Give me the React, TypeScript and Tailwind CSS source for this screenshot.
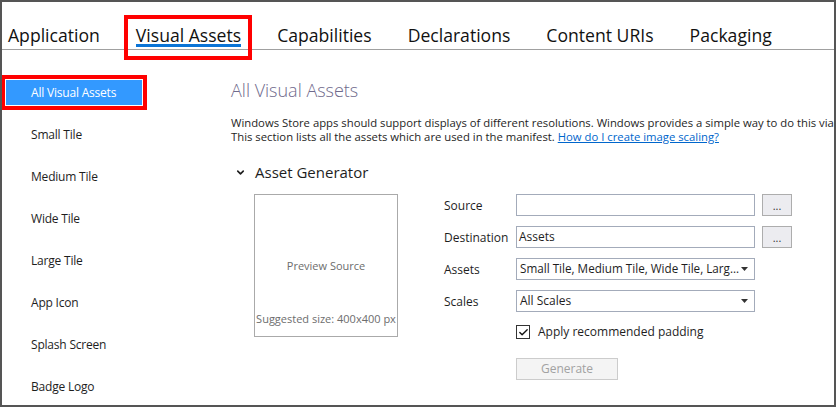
import { Check, ChevronDown } from 'lucide-react'

const tabs = ['Application', 'Visual Assets', 'Capabilities', 'Declarations', 'Content URIs', 'Packaging']

const sideItems = [
  'All Visual Assets',
  'Small Tile',
  'Medium Tile',
  'Wide Tile',
  'Large Tile',
  'App Icon',
  'Splash Screen',
  'Badge Logo',
]

const Caret = () => (
  <svg width="7" height="4" viewBox="0 0 7 4" className="shrink-0">
    <path d="M0 0h7L3.5 4z" fill="#333" />
  </svg>
)

const FieldRow = ({ label, children }: { label: string; children: React.ReactNode }) => (
  <div className="flex h-[22px] items-center">
    <span className="w-[72px] pt-[2px] text-[12px] text-[#1e1e1e]">{label}</span>
    {children}
  </div>
)

const BrowseButton = () => (
  <button className="ml-[7px] h-[22px] w-[30px] border border-[#adadad] bg-[#ececf0] text-[11px] leading-none text-[#333]">
    ...
  </button>
)

export default function App() {
  return (
    <div className="flex h-[407px] w-[836px] flex-col overflow-hidden border-2 border-[#555555] bg-white font-['Open_Sans',sans-serif] text-[#1e1e1e]">
      <nav className="flex h-[48px] shrink-0 items-end gap-[36px] border-b border-[#a0a0a0] pl-[6px]">
        {tabs.map((tab) => (
          <div key={tab} className="relative flex h-full items-end pb-[2px]">
            <span className="text-[17.6px] leading-[24px] text-[#111]">{tab}</span>
            {tab === 'Visual Assets' && (
              <>
                <span className="absolute bottom-[2px] left-0 right-0 h-[3px] bg-[#0a74d6]" />
                <span className="absolute -bottom-[11px] -left-[12px] -right-[11px] top-[13px] border-4 border-[#ff0000]" />
              </>
            )}
          </div>
        ))}
      </nav>

      <div className="flex min-h-0 flex-1">
        <aside className="relative flex w-[200px] shrink-0 flex-col gap-[17px] pt-[30px]">
          {sideItems.map((item, i) => (
            <div
              key={item}
              className={
                i === 0
                  ? 'relative ml-[4px] flex h-[25px] w-[136px] items-center bg-[#3399ff] pl-[25px] text-[12px] tracking-[-0.2px] text-white'
                  : 'ml-[4px] flex h-[25px] items-center pl-[25px] text-[12px] tracking-[-0.2px] text-[#1e1e1e]'
              }
            >
              {item}
              {i === 0 && (
                <span className="absolute -bottom-[5px] -left-[5px] -right-[5px] -top-[5px] border-4 border-[#ff0000]" />
              )}
            </div>
          ))}
        </aside>

        <main className="min-w-0 flex-1 pl-[29px] pt-[28px]">
          <h1 className="whitespace-nowrap text-[18px] leading-[24px] font-light text-[#6f6a8c]">All Visual Assets</h1>
          <p className="mt-[14px] whitespace-nowrap text-[11.3px] leading-[14px] text-[#1e1e1e]">
            Windows Store apps should support displays of different resolutions. Windows provides a simple way to do this via
            <br />
            This section lists all the assets which are used in the manifest.{' '}
            <a href="#" className="text-[#0066cc] underline">
              How do I create image scaling?
            </a>
          </p>

          <div className="mt-[17px] flex h-[22px] items-center">
            <ChevronDown size={11} strokeWidth={3.5} className="ml-[4px] text-[#1e1e1e]" />
            <span className="ml-[9px] text-[15px] text-[#1e1e1e]">Asset Generator</span>
          </div>

          <div className="mt-[11px] ml-[23px] flex">
            <div className="flex h-[143px] w-[144px] shrink-0 flex-col items-center border border-[#aaaaaa] text-[11px] text-[#6d6d6d]">
              <span className="mt-[63px]">Preview Source</span>
              <span className="mt-auto mb-[9px] whitespace-nowrap">Suggested size: 400x400 px</span>
            </div>

            <div className="ml-[46px] flex flex-col gap-[10px]">
              <FieldRow label="Source">
                <div className="h-[22px] w-[239px] border border-[#a3abba] bg-white" />
                <BrowseButton />
              </FieldRow>
              <FieldRow label="Destination">
                <div className="flex h-[22px] w-[239px] items-center border border-[#a3abba] bg-white pl-[2px] text-[12px]">
                  Assets
                </div>
                <BrowseButton />
              </FieldRow>
              <FieldRow label="Assets">
                <div className="flex h-[22px] w-[239px] items-center justify-between border border-[#a3abba] bg-white pl-[3px] pr-[6px] text-[11.7px]">
                  <span className="whitespace-nowrap">Small Tile, Medium Tile, Wide Tile, Larg...</span>
                  <Caret />
                </div>
              </FieldRow>
              <FieldRow label="Scales">
                <div className="flex h-[22px] w-[239px] items-center justify-between border border-[#a3abba] bg-white pl-[3px] pr-[6px] text-[12px]">
                  <span>All Scales</span>
                  <Caret />
                </div>
              </FieldRow>
              <div className="ml-[72px] mt-[1px] flex items-center">
                <span className="flex h-[14px] w-[14px] items-center justify-center border border-[#333] bg-white">
                  <Check size={11} strokeWidth={3} className="text-[#111]" />
                </span>
                <span className="ml-[8px] text-[12px]">Apply recommended padding</span>
              </div>
              <button className="ml-[72px] mt-[7px] h-[22px] w-[102px] border border-[#cccccc] bg-[#f4f4f4] text-[12px] text-[#a2a2a2]">
                Generate
              </button>
            </div>
          </div>
        </main>
      </div>
    </div>
  )
}
